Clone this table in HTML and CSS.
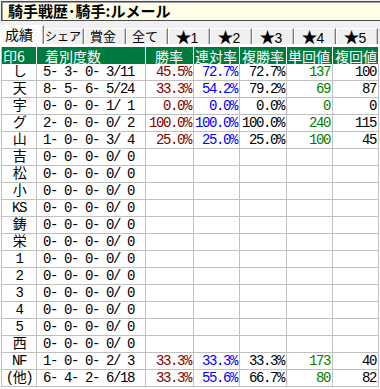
FILE: index.html
```html
<!DOCTYPE html>
<html lang="ja">
<head>
<meta charset="utf-8">
<title>騎手戦歴</title>
<link rel="stylesheet" href="styles.css">
</head>
<body>
<div class="title">騎手戦歴･騎手:ルメール</div>
<div class="tabs">
  <div class="tab sel">成績</div>
  <div class="tab w40">シェア</div>
  <div class="tab">賞金</div>
  <div class="tab">全て</div>
  <div class="tab star"><span class="st">★</span>1</div>
  <div class="tab star"><span class="st">★</span>2</div>
  <div class="tab star"><span class="st">★</span>3</div>
  <div class="tab star"><span class="st">★</span>4</div>
  <div class="tab star"><span class="st">★</span>5</div>
</div>
<div class="panel">
  <div class="grid">
    <div class="row head">
      <div class="c c1">印6</div><div class="c c2">着別度数</div><div class="c c3">勝率</div><div class="c c4">連対率</div><div class="c c5">複勝率</div><div class="c c6">単回値</div><div class="c c7">複回値</div>
    </div>
    <div class="row"><div class="c c1">し</div><div class="c c2">5- 3- 0- 3/11</div><div class="c c3 red">45.5%</div><div class="c c4 blue">72.7%</div><div class="c c5">72.7%</div><div class="c c6 green">137</div><div class="c c7">100</div></div>
    <div class="row"><div class="c c1">天</div><div class="c c2">8- 5- 6- 5/24</div><div class="c c3 red">33.3%</div><div class="c c4 blue">54.2%</div><div class="c c5">79.2%</div><div class="c c6 green">69</div><div class="c c7">87</div></div>
    <div class="row"><div class="c c1">宇</div><div class="c c2">0- 0- 0- 1/ 1</div><div class="c c3 red">0.0%</div><div class="c c4 blue">0.0%</div><div class="c c5">0.0%</div><div class="c c6 green">0</div><div class="c c7">0</div></div>
    <div class="row"><div class="c c1">グ</div><div class="c c2">2- 0- 0- 0/ 2</div><div class="c c3 red">100.0%</div><div class="c c4 blue">100.0%</div><div class="c c5">100.0%</div><div class="c c6 green">240</div><div class="c c7">115</div></div>
    <div class="row"><div class="c c1">山</div><div class="c c2">1- 0- 0- 3/ 4</div><div class="c c3 red">25.0%</div><div class="c c4 blue">25.0%</div><div class="c c5">25.0%</div><div class="c c6 green">100</div><div class="c c7">45</div></div>
    <div class="row"><div class="c c1">吉</div><div class="c c2">0- 0- 0- 0/ 0</div><div class="c c3"></div><div class="c c4"></div><div class="c c5"></div><div class="c c6"></div><div class="c c7"></div></div>
    <div class="row"><div class="c c1">松</div><div class="c c2">0- 0- 0- 0/ 0</div><div class="c c3"></div><div class="c c4"></div><div class="c c5"></div><div class="c c6"></div><div class="c c7"></div></div>
    <div class="row"><div class="c c1">小</div><div class="c c2">0- 0- 0- 0/ 0</div><div class="c c3"></div><div class="c c4"></div><div class="c c5"></div><div class="c c6"></div><div class="c c7"></div></div>
    <div class="row"><div class="c c1">KS</div><div class="c c2">0- 0- 0- 0/ 0</div><div class="c c3"></div><div class="c c4"></div><div class="c c5"></div><div class="c c6"></div><div class="c c7"></div></div>
    <div class="row"><div class="c c1">鋳</div><div class="c c2">0- 0- 0- 0/ 0</div><div class="c c3"></div><div class="c c4"></div><div class="c c5"></div><div class="c c6"></div><div class="c c7"></div></div>
    <div class="row"><div class="c c1">栄</div><div class="c c2">0- 0- 0- 0/ 0</div><div class="c c3"></div><div class="c c4"></div><div class="c c5"></div><div class="c c6"></div><div class="c c7"></div></div>
    <div class="row"><div class="c c1">1</div><div class="c c2">0- 0- 0- 0/ 0</div><div class="c c3"></div><div class="c c4"></div><div class="c c5"></div><div class="c c6"></div><div class="c c7"></div></div>
    <div class="row"><div class="c c1">2</div><div class="c c2">0- 0- 0- 0/ 0</div><div class="c c3"></div><div class="c c4"></div><div class="c c5"></div><div class="c c6"></div><div class="c c7"></div></div>
    <div class="row"><div class="c c1">3</div><div class="c c2">0- 0- 0- 0/ 0</div><div class="c c3"></div><div class="c c4"></div><div class="c c5"></div><div class="c c6"></div><div class="c c7"></div></div>
    <div class="row"><div class="c c1">4</div><div class="c c2">0- 0- 0- 0/ 0</div><div class="c c3"></div><div class="c c4"></div><div class="c c5"></div><div class="c c6"></div><div class="c c7"></div></div>
    <div class="row"><div class="c c1">5</div><div class="c c2">0- 0- 0- 0/ 0</div><div class="c c3"></div><div class="c c4"></div><div class="c c5"></div><div class="c c6"></div><div class="c c7"></div></div>
    <div class="row"><div class="c c1">西</div><div class="c c2">0- 0- 0- 0/ 0</div><div class="c c3"></div><div class="c c4"></div><div class="c c5"></div><div class="c c6"></div><div class="c c7"></div></div>
    <div class="row"><div class="c c1">NF</div><div class="c c2">1- 0- 0- 2/ 3</div><div class="c c3 red">33.3%</div><div class="c c4 blue">33.3%</div><div class="c c5">33.3%</div><div class="c c6 green">173</div><div class="c c7">40</div></div>
    <div class="row"><div class="c c1">(他)</div><div class="c c2">6- 4- 2- 6/18</div><div class="c c3 red">33.3%</div><div class="c c4 blue">55.6%</div><div class="c c5">66.7%</div><div class="c c6 green">80</div><div class="c c7">82</div></div>
  </div>
</div>
</body>
</html>
```
FILE: styles.css
```css
* { box-sizing: border-box; }
html, body {
  margin: 0;
  padding: 0;
}
body {
  width: 380px;
  height: 389px;
  overflow: hidden;
  background: #f0f0f0;
  font-family: "Noto Sans CJK JP", sans-serif;
  color: #000;
}
.title {
  margin: 1px 0 0 1px;
  width: 379px;
  height: 20px;
  border: 1px solid #4a4a4a;
  border-right: none;
  box-shadow: inset 1px 1px 0 #a0a0a0;
  background: #fffee6;
  padding-left: 6px;
  font: bold 15px/18px "Noto Sans CJK JP", sans-serif;
  white-space: nowrap;
}
.tabs {
  display: flex;
  align-items: flex-end;
  margin-top: 4px;
  height: 19px;
}
.tab {
  width: 42px;
  height: 16px;
  border-top: 1px solid #fff;
  border-left: 1px solid #fff;
  border-right: 1px solid #7a7a7a;
  box-shadow: inset -1px 0 0 #c8c8c8;
  background: #f0f0f0;
  font-size: 13px;
  line-height: 14px;
  text-align: center;
  padding-right: 4px;
  white-space: nowrap;
}
.tab.w40 { width: 40px; font-size: 12px; }
.tab.star {
  font-family: "Liberation Sans", sans-serif;
  font-size: 14px;
}
.st {
  font-family: "Noto Sans CJK JP", sans-serif;
  font-size: 16px;
  line-height: 14px;
  margin-right: -1px;
}
.tab.sel {
  width: 44px;
  height: 19px;
  background: #fbfbfb;
  font-size: 14px;
  line-height: 17px;
  padding-right: 6px;
}
.panel {
  background: #fff;
  padding: 3px 0 0 0;
  height: 345px;
}
.grid {
  margin-left: 1px;
  border-left: 1px solid #c0c0c0;
  width: 378px;
}
.row {
  display: flex;
  height: 17px;
}
.c {
  height: 17px;
  border-right: 1px solid #c0c0c0;
  border-bottom: 1px solid #c0c0c0;
  font-family: "Liberation Mono", "Noto Sans CJK JP", monospace;
  font-size: 14px;
  letter-spacing: -1.4px;
  line-height: 16px;
  white-space: pre;
  text-align: right;
  padding-right: 2px;
}
.c1 { width: 35px; text-align: center; padding-right: 0; }
.c2 { width: 109px; text-align: left; padding-left: 6px; }
.c3 { width: 48px; }
.c4 { width: 46px; }
.c5 { width: 47px; }
.c6 { width: 46px; }
.c7 { width: 46px; }
.red { color: #800000; }
.blue { color: #0000ff; }
.green { color: #008000; }

.head .c {
  background: #007b40;
  color: #fff;
  border-right-color: #fff;
  border-bottom: none;
  font-family: "Noto Sans CJK JP", sans-serif;
  font-size: 14px;
  letter-spacing: 0;
  line-height: 15px;
  padding-top: 2px;
  text-align: left;
  padding-right: 0;
}
.head .c1 { padding-left: 1px; }
.head .c2 { padding-left: 8px; }
.head .c3 { padding-left: 9px; }
.head .c4 { padding-left: 1px; }
.head .c5 { padding-left: 2px; }
.head .c6 { padding-left: 1px; }
.head .c7 { padding-left: 2px; }
```
